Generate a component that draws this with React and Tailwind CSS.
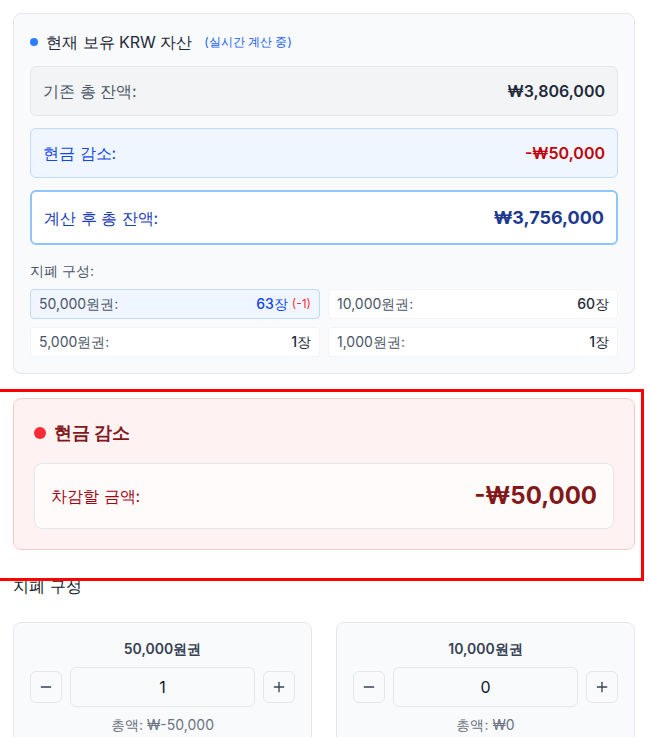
import { Minus, Plus } from "lucide-react";

const notes = [
  { label: "50,000원권", count: 63, diff: -1 },
  { label: "10,000원권", count: 60 },
  { label: "5,000원권", count: 1 },
  { label: "1,000원권", count: 1 },
];

const inputs = [
  { label: "50,000원권", value: 1, total: "₩-50,000" },
  { label: "10,000원권", value: 0, total: "₩0" },
  { label: "5,000원권", value: 0, total: "₩0" },
  { label: "1,000원권", value: 0, total: "₩0" },
];

function NoteCell({ note }) {
  const changed = note.diff !== undefined;
  return (
    <div
      className={
        changed
          ? "flex h-[30px] items-center justify-between rounded border border-blue-200 bg-blue-50 px-2 text-sm"
          : "flex h-[30px] items-center justify-between rounded border border-gray-100 bg-white px-2 text-sm"
      }
    >
      <span className="text-gray-600">{note.label}:</span>
      <span className="flex items-center">
        <span className={changed ? "font-medium text-blue-700" : "font-medium text-gray-800"}>{note.count}장</span>
        {changed && <span className="ml-1 text-xs text-red-500">({note.diff})</span>}
      </span>
    </div>
  );
}

function NoteInput({ item }) {
  return (
    <div className="rounded-lg border border-gray-200 bg-gray-50 p-4">
      <div className="mb-2 text-center text-sm font-semibold text-gray-700">{item.label}</div>
      <div className="flex items-center gap-2">
        <button className="flex h-8 w-8 items-center justify-center rounded-md border border-gray-200 bg-gray-50 text-gray-700">
          <Minus size={16} strokeWidth={2} />
        </button>
        <div className="flex h-10 flex-1 items-center justify-center rounded-md border border-gray-200 bg-gray-50 text-base text-gray-900">
          {item.value}
        </div>
        <button className="flex h-8 w-8 items-center justify-center rounded-md border border-gray-200 bg-gray-50 text-gray-700">
          <Plus size={16} strokeWidth={2} />
        </button>
      </div>
      <div className="mt-2 flex justify-center text-sm text-gray-500">
        <span>총액:&nbsp;</span>
        <span className="font-[Inter,Noto_Sans_CJK_KR,sans-serif]">{item.total}</span>
      </div>
    </div>
  );
}

export default function App() {
  return (
    <div className="relative h-[737px] overflow-hidden bg-white pl-[13px] pr-[16px] pt-[13px] font-[Inter,sans-serif]">
      <div className="flex flex-col gap-6">
        {/* current KRW holdings */}
        <div className="rounded-lg border border-gray-200 bg-gray-50 p-4">
          <div className="mb-3 flex h-6 items-center">
            <span className="mr-2 h-2 w-2 rounded-full bg-blue-500" />
            <span className="text-base text-gray-800">현재 보유 KRW 자산</span>
            <span className="ml-3 text-xs text-blue-600">(실시간 계산 중)</span>
          </div>
          <div className="space-y-3">
            <div className="flex h-[50px] items-center justify-between rounded-md border border-gray-200 bg-gray-100 px-3">
              <span className="text-base text-gray-600">기존 총 잔액:</span>
              <span className="font-[Inter,Noto_Sans_CJK_KR,sans-serif] text-base font-semibold text-gray-800">₩3,806,000</span>
            </div>
            <div className="flex h-[50px] items-center justify-between rounded-md border border-blue-200 bg-blue-50 px-3">
              <span className="text-base text-blue-700">현금 감소:</span>
              <span className="font-[Inter,Noto_Sans_CJK_KR,sans-serif] text-base font-semibold text-red-700">-₩50,000</span>
            </div>
            <div className="flex h-[55px] items-center justify-between rounded-md border-2 border-blue-300 bg-white px-3">
              <span className="text-base text-blue-800">계산 후 총 잔액:</span>
              <span className="font-[Inter,Noto_Sans_CJK_KR,sans-serif] text-lg font-bold text-blue-900">₩3,756,000</span>
            </div>
          </div>
          <div className="mb-2 mt-4 text-sm text-gray-600">지폐 구성:</div>
          <div className="grid grid-cols-2 gap-2">
            {notes.map((n) => (
              <NoteCell key={n.label} note={n} />
            ))}
          </div>
        </div>

        {/* cash decrease */}
        <div className="rounded-lg border border-red-200 bg-red-50 p-5">
          <div className="mb-4 flex h-7 items-center gap-2">
            <span className="h-3 w-3 rounded-full bg-red-500" />
            <span className="text-lg font-bold text-red-900">현금 감소</span>
          </div>
          <div className="flex h-[66px] items-center justify-between rounded-lg border border-slate-200 bg-white/70 px-4">
            <span className="text-base text-red-800">차감할 금액:</span>
            <span className="font-[Inter,Noto_Sans_CJK_KR,sans-serif] text-2xl font-bold text-red-900">-₩50,000</span>
          </div>
        </div>

        <h3 className="text-base text-gray-900">지폐 구성</h3>

        <div className="grid grid-cols-2 gap-6">
          {inputs.map((it) => (
            <NoteInput key={it.label} item={it} />
          ))}
        </div>
      </div>

      {/* highlight frame */}
      <div className="pointer-events-none absolute left-[-3px] top-[389px] h-[192px] w-[647px] border-[3px] border-[#ff0000]" />
    </div>
  );
}
